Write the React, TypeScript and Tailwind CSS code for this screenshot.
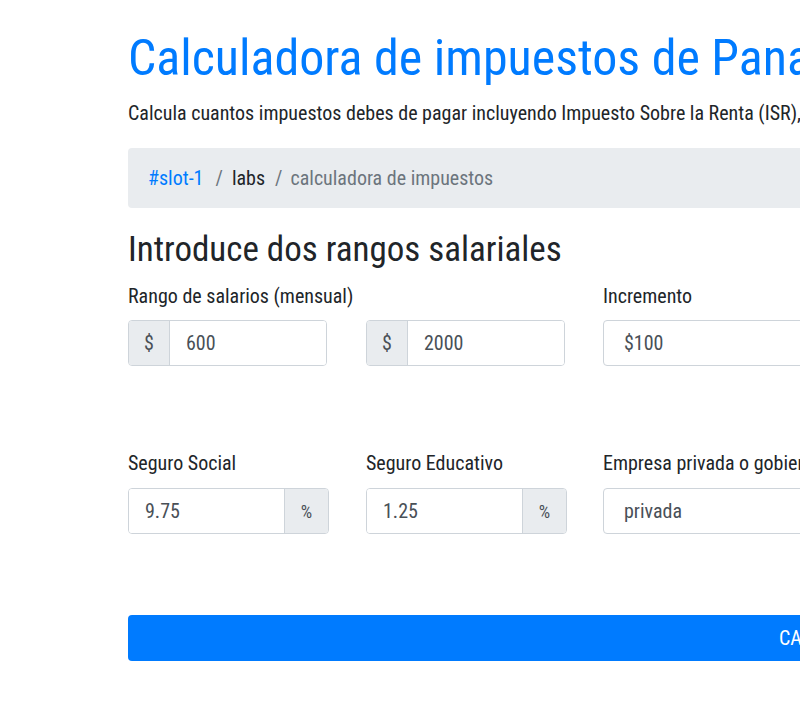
import React from "react";

const font = { fontFamily: '"Roboto Condensed", Roboto, "Liberation Sans Narrow", sans-serif' };

function Addon({ children, side }: { children: React.ReactNode; side: "left" | "right" }) {
	return (
		<div
			className={
				side === "left"
					? "flex w-[41px] shrink-0 items-center justify-center border-r border-[#ced4da] bg-[#e9ecef] text-[20px] text-[#495057]"
					: "flex w-[44px] shrink-0 items-center justify-center border-l border-[#ced4da] bg-[#e9ecef] text-[18px] text-[#495057]"
			}
		>
			{children}
		</div>
	);
}

function Field({ value }: { value: string }) {
	return (
		<div className="flex min-w-0 flex-1 items-center bg-white px-4 text-[20px] text-[#495057]">
			{value}
		</div>
	);
}

export default function App() {
	return (
		<div className="w-full overflow-hidden bg-white text-[20px] text-[#212529]" style={font}>
			<div className="box-content w-[1110px] pl-[128px]">
				<h1 className="mt-[28px] text-[50px] leading-[60px] text-[#007bff]">
					Calculadora de impuestos de Panamá
				</h1>
				<p className="mt-[10px] leading-[30px]">
					Calcula cuantos impuestos debes de pagar incluyendo Impuesto Sobre la Renta (ISR), Seguro Social y Seguro Educativo.
				</p>

				<nav className="mt-[20px] flex h-[60px] items-center rounded-[4px] bg-[#e9ecef] pl-[20px] pr-[21px]">
					<span className="text-[#007bff]">#slot-1</span>
					<span className="pl-[12px] pr-[9px] text-[#6c757d]">/</span>
					<span>labs</span>
					<span className="pl-[10px] pr-[8px] text-[#6c757d]">/</span>
					<span className="text-[#6c757d]">calculadora de impuestos</span>
				</nav>

				<h2 className="mt-[21px] text-[35px] leading-[42px]">Introduce dos rangos salariales</h2>

				<div className="mt-[10px] flex">
					<div className="w-[475px] shrink-0">
						<label className="block leading-[30px]">Rango de salarios (mensual)</label>
						<div className="mt-[9px] flex">
							<div className="w-[238px] shrink-0">
								<div className="flex h-[46px] w-[199px] overflow-hidden rounded-[4px] border border-[#ced4da]">
									<Addon side="left">$</Addon>
									<Field value="600" />
								</div>
							</div>
							<div className="w-[237px] shrink-0">
								<div className="flex h-[46px] w-[199px] overflow-hidden rounded-[4px] border border-[#ced4da]">
									<Addon side="left">$</Addon>
									<Field value="2000" />
								</div>
							</div>
						</div>
					</div>
					<div className="w-[445px] shrink-0">
						<label className="block leading-[30px]">Incremento</label>
						<div className="mt-[9px] flex h-[46px] items-center rounded-[4px] border border-[#ced4da] px-5 text-[#495057]">
							$100
						</div>
					</div>
				</div>

				<div className="mt-[82px] flex">
					<div className="w-[238px] shrink-0">
						<label className="block leading-[30px]">Seguro Social</label>
						<div className="mt-[10px] flex h-[46px] w-[201px] overflow-hidden rounded-[4px] border border-[#ced4da]">
							<Field value="9.75" />
							<Addon side="right">%</Addon>
						</div>
					</div>
					<div className="w-[237px] shrink-0">
						<label className="block leading-[30px]">Seguro Educativo</label>
						<div className="mt-[10px] flex h-[46px] w-[201px] overflow-hidden rounded-[4px] border border-[#ced4da]">
							<Field value="1.25" />
							<Addon side="right">%</Addon>
						</div>
					</div>
					<div className="w-[445px] shrink-0">
						<label className="block leading-[30px]">Empresa privada o gobierno</label>
						<div className="mt-[10px] flex h-[46px] items-center rounded-[4px] border border-[#ced4da] px-5 text-[#495057]">
							privada
						</div>
					</div>
				</div>

				<button className="mb-[40px] mt-[81px] flex h-[46px] w-[1110px] items-center rounded-[4px] bg-[#007bff] pl-[651px] uppercase text-white">
					Calcular
				</button>
			</div>
		</div>
	);
}
